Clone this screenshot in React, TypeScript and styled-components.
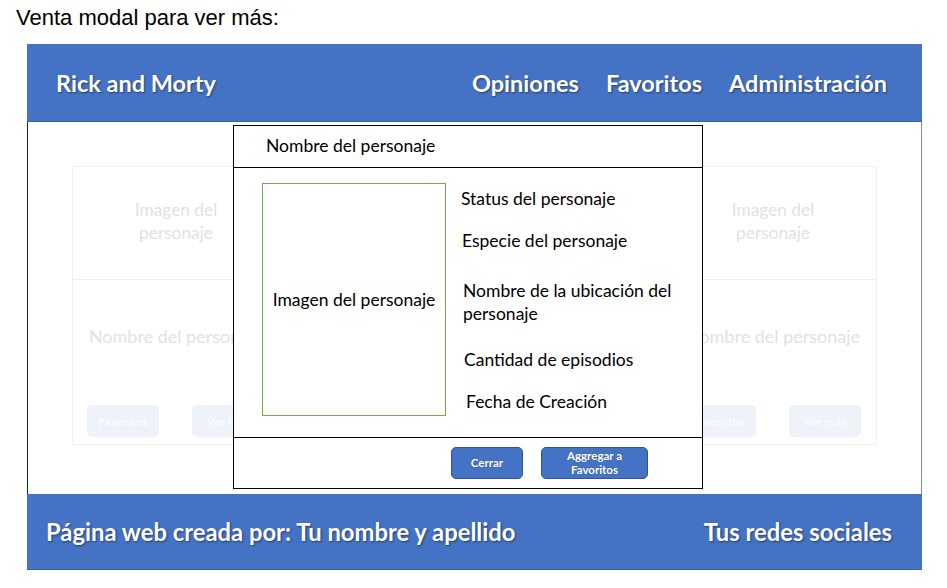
import React from "react";
import styled, { createGlobalStyle } from "styled-components";

const Global = createGlobalStyle`
  html, body { margin: 0; padding: 0; background: #ffffff; }
  body { width: 947px; height: 588px; overflow: hidden; font-family: "Lato", "Open Sans", sans-serif; }
`;

const Page = styled.div`
  width: 947px;
  height: 588px;
  background: #fff;
`;

const Caption = styled.h1`
  margin: 0;
  padding: 5px 0 0 16px;
  height: 44px;
  box-sizing: border-box;
  font-family: "Liberation Sans", Arial, sans-serif;
  font-weight: 400;
  font-size: 22px;
  line-height: 26px;
  color: #000;
`;

const Frame = styled.div`
  margin-left: 27px;
  width: 895px;
  display: flex;
  flex-direction: column;
`;

const Bar = styled.div<{ $h: number; $pl: number; $pr: number }>`
  height: ${(p) => p.$h}px;
  background: #4472c4;
  display: flex;
  align-items: center;
  justify-content: space-between;
  padding: 0 ${(p) => p.$pr}px 0 ${(p) => p.$pl}px;
  box-sizing: border-box;
  border-bottom: 1px solid #3a63ad;
`;

const BarText = styled.span<{ $size?: number }>`
  color: #fff;
  font-family: "Lato", sans-serif;
  font-weight: 700;
  font-size: ${(p) => p.$size ?? 23.5}px;
  text-shadow: 1px 1px 2px rgba(0, 0, 0, 0.45);
  white-space: nowrap;
`;

const Nav = styled.nav`
  display: flex;
  gap: 27px;
`;

const Body = styled.div`
  position: relative;
  height: 372px;
  border-left: 1px solid #222;
  border-right: 1px solid #8a8a8a;
  box-sizing: border-box;
  padding: 44px 44px 0 44px;
  display: flex;
  justify-content: space-between;
  align-items: flex-start;
`;

const Card = styled.div`
  width: 208px;
  height: 279px;
  border: 1px solid #f0f0f0;
  box-sizing: border-box;
  display: flex;
  flex-direction: column;
`;

const CardImage = styled.div`
  height: 113px;
  border-bottom: 1px solid #eeeeee;
  display: flex;
  align-items: center;
  justify-content: center;
  text-align: center;
  color: #e2e2e2;
  font-size: 17.3px;
  line-height: 23px;
  padding-bottom: 4px;
  box-sizing: border-box;
`;

const CardName = styled.div`
  height: 112px;
  display: flex;
  align-items: center;
  justify-content: center;
  color: #e2e2e2;
  font-size: 18px;
  white-space: nowrap;
  overflow: hidden;
`;

const CardActions = styled.div`
  display: flex;
  justify-content: space-between;
  padding: 13px 15px 0 14px;
`;

const GhostButton = styled.div`
  width: 72px;
  height: 32px;
  border-radius: 5px;
  background: #eef2f9;
  color: #fbfcff;
  font-size: 12px;
  font-weight: 700;
  display: flex;
  align-items: center;
  justify-content: center;
`;

const Modal = styled.div`
  position: absolute;
  left: 205px;
  top: 3px;
  width: 470px;
  height: 364px;
  background: #fff;
  border: 1px solid #000;
  box-sizing: border-box;
  display: flex;
  flex-direction: column;
  color: #000;
`;

const ModalHeader = styled.div`
  height: 42px;
  border-bottom: 1px solid #000;
  display: flex;
  align-items: center;
  padding: 0 0 3px 32px;
  box-sizing: border-box;
  font-size: 17.5px;
`;

const ModalBody = styled.div`
  height: 270px;
  border-bottom: 1px solid #000;
  box-sizing: border-box;
  display: flex;
  padding: 15px 0 0 28px;
  gap: 15px;
`;

const ImageBox = styled.div`
  width: 184px;
  height: 233px;
  border: 1px solid #70ad47;
  box-sizing: border-box;
  display: flex;
  align-items: center;
  justify-content: center;
  font-size: 17.5px;
  white-space: nowrap;
`;

const Details = styled.div`
  display: flex;
  flex-direction: column;
  width: 228px;
  padding-top: 4px;
`;

const Detail = styled.div<{ $mt: number; $shift: number }>`
  margin-top: ${(p) => p.$mt}px;
  padding-left: ${(p) => p.$shift}px;
  font-size: 17.5px;
  line-height: 23px;
`;

const ModalFooter = styled.div`
  flex: 1;
  display: flex;
  align-items: flex-start;
  padding: 9px 0 0 217px;
  gap: 18px;
`;

const PrimaryButton = styled.button<{ $w: number }>`
  width: ${(p) => p.$w}px;
  height: 32px;
  background: #4472c4;
  border: 1px solid #2f5597;
  border-radius: 5px;
  color: #fff;
  font-family: "Lato", sans-serif;
  font-weight: 700;
  font-size: 11.5px;
  line-height: 14px;
  padding: 0;
  text-shadow: 0 0 1px rgba(0, 0, 0, 0.3);
  display: flex;
  align-items: center;
  justify-content: center;
  text-align: center;
`;

const BgCard = () => (
  <Card>
    <CardImage>
      Imagen del
      <br />
      personaje
    </CardImage>
    <CardName>Nombre del personaje</CardName>
    <CardActions>
      <GhostButton>Favoritos</GhostButton>
      <GhostButton>Ver más</GhostButton>
    </CardActions>
  </Card>
);

export default function App() {
  return (
    <Page>
      <Global />
      <Caption>Venta modal para ver más:</Caption>
      <Frame>
        <Bar $h={78} $pl={29} $pr={35}>
          <BarText>Rick and Morty</BarText>
          <Nav>
            <BarText>Opiniones</BarText>
            <BarText>Favoritos</BarText>
            <BarText>Administración</BarText>
          </Nav>
        </Bar>
        <Body>
          <BgCard />
          <Card />
          <BgCard />
          <Modal>
            <ModalHeader>Nombre del personaje</ModalHeader>
            <ModalBody>
              <ImageBox>Imagen del personaje</ImageBox>
              <Details>
                <Detail $mt={0} $shift={0}>Status del personaje</Detail>
                <Detail $mt={19} $shift={1}>Especie del personaje</Detail>
                <Detail $mt={27} $shift={2}>Nombre de la ubicación del personaje</Detail>
                <Detail $mt={23} $shift={3}>Cantidad de episodios</Detail>
                <Detail $mt={19} $shift={5}>Fecha de Creación</Detail>
              </Details>
            </ModalBody>
            <ModalFooter>
              <PrimaryButton $w={72}>Cerrar</PrimaryButton>
              <PrimaryButton $w={107}>
                Aggregar a
                <br />
                Favoritos
              </PrimaryButton>
            </ModalFooter>
          </Modal>
        </Body>
        <Bar $h={76} $pl={19} $pr={30}>
          <BarText $size={23.8}>Página web creada por: Tu nombre y apellido</BarText>
          <BarText $size={23.8}>Tus redes sociales</BarText>
        </Bar>
      </Frame>
    </Page>
  );
}
